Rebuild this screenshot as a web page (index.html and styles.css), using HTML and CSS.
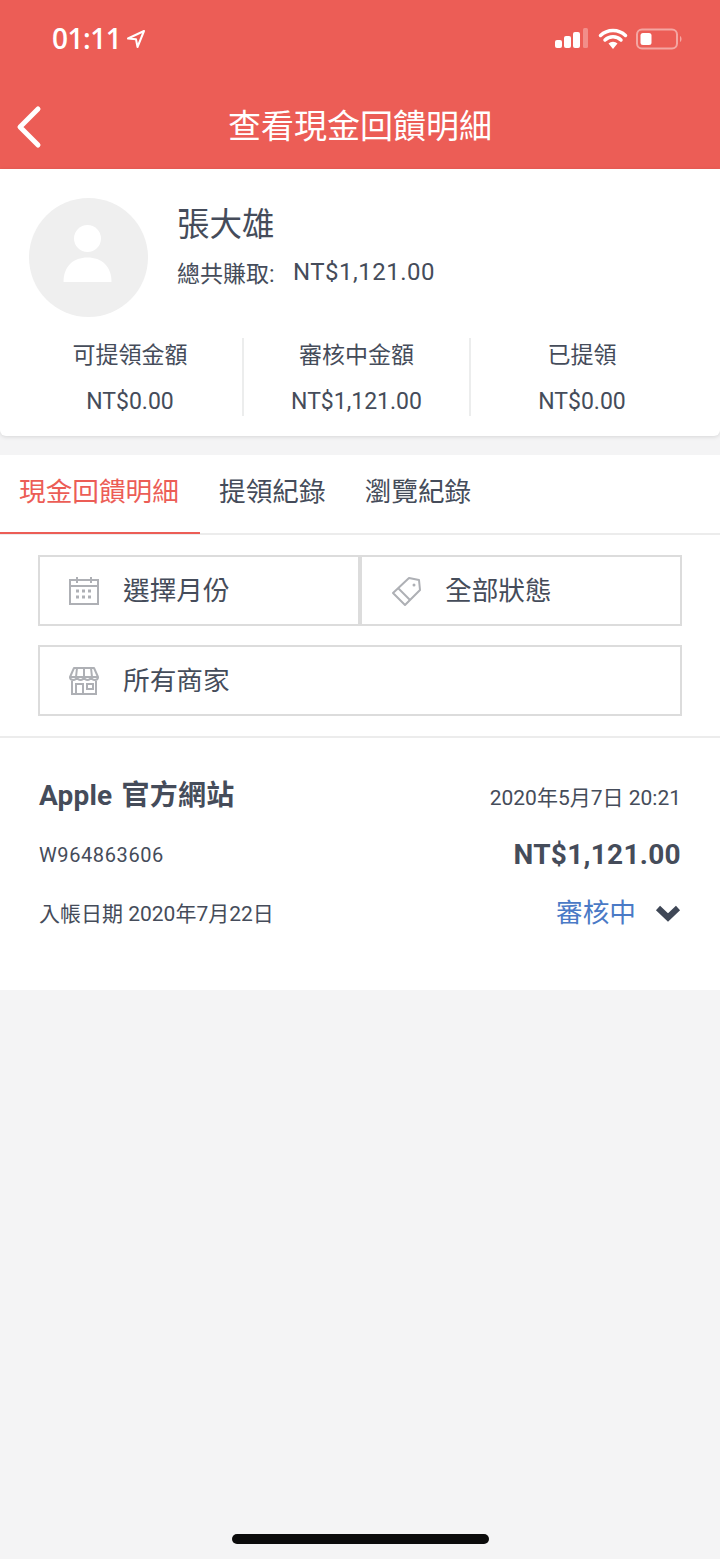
FILE: index.html
```html
<!DOCTYPE html>
<html lang="zh-Hant">
<head>
  <meta charset="UTF-8">
  <title>查看現金回饋明細</title>
  <meta name="viewport" content="width=device-width, initial-scale=1.0" />
  <link rel="stylesheet" href="styles.css">
</head>
<body>

<header class="top">
  <div class="status">
    <div class="clock">
      <span>01:11</span>
      <svg class="arrow" width="20" height="20" viewBox="0 0 20 20"><path d="M18 2 2 9.500l8 .8 1.500 7.700z" fill="none" stroke="#fff" stroke-width="2" stroke-linejoin="round"/></svg>
    </div>
    <div class="status-icons">
      <svg class="signal" width="33" height="20" viewBox="0 0 33 20"><rect x="0" y="12" width="7" height="8" rx="2" fill="#fff"/><rect x="9" y="8" width="7" height="12" rx="2" fill="#fff"/><rect x="18" y="4" width="7" height="16" rx="2" fill="#fff"/><rect x="28" y="0" width="5" height="20" rx="1.500" fill="#fff" opacity=".3"/></svg>
      <svg class="wifi" width="30" height="21" viewBox="0 0 30 21"><path d="M2.500 7.500a18 18 0 0 1 25 0M7 12a11.500 11.500 0 0 1 16 0" fill="none" stroke="#fff" stroke-width="3.500" stroke-linecap="round"/><path d="M10.500 15.500a6.500 6.500 0 0 1 9 0L15 21z" fill="#fff"/></svg>
      <svg width="48" height="22" viewBox="0 0 48 22"><rect x="1" y="1.500" width="40" height="19" rx="5" fill="none" stroke="#fff" stroke-opacity=".45" stroke-width="2"/><rect x="4.500" y="5" width="11" height="12" rx="2.500" fill="#fff"/><path d="M44 8c2 .8 2 5.200 0 6z" fill="#fff" fill-opacity=".45"/></svg>
    </div>
  </div>
  <div class="navbar">
    <svg class="back" width="30" height="44" viewBox="0 0 30 44"><path d="M24 4 6 22l18 18" fill="none" stroke="#fff" stroke-width="5" stroke-linecap="round" stroke-linejoin="round"/></svg>
    <h1>查看現金回饋明細</h1>
  </div>
</header>

<section class="profile">
  <div class="profile-top">
    <div class="avatar">
      <svg width="120" height="120" viewBox="0 0 120 120"><circle cx="58.500" cy="40.500" r="13.500" fill="#fff"/><path d="M34.500 84c0-16 10-24.500 24-24.500s24 8.500 24 24.500z" fill="#fff"/></svg>
    </div>
    <div class="who">
      <div class="name">張大雄</div>
      <div class="earned"><span class="earned-label">總共賺取:</span><span class="earned-value">NT$1,121.00</span></div>
    </div>
  </div>
  <div class="stats">
    <div class="stat"><div class="stat-label">可提領金額</div><div class="stat-value">NT$0.00</div></div>
    <div class="stat"><div class="stat-label">審核中金額</div><div class="stat-value">NT$1,121.00</div></div>
    <div class="stat"><div class="stat-label">已提領</div><div class="stat-value">NT$0.00</div></div>
  </div>
</section>

<section class="panel">
  <nav class="tabs">
    <div class="tab active">現金回饋明細</div>
    <div class="tab">提領紀錄</div>
    <div class="tab">瀏覽紀錄</div>
  </nav>

  <div class="filters">
    <div class="filter-row">
      <div class="filter">
        <svg class="filter-icon" width="32" height="30" viewBox="0 0 32 30" fill="none" stroke="#aeb0b5" stroke-width="2"><rect x="2" y="4" width="28" height="24"/><path d="M2 10h28M9 1v6M23 1v6"/><path d="M8 15h3M14 15h3M20 15h3M8 21h3M14 21h3M20 21h3" stroke-width="3"/></svg>
        <span>選擇月份</span>
      </div>
      <div class="filter">
        <svg class="filter-icon" width="32" height="32" viewBox="0 0 32 32" fill="none" stroke="#aeb0b5" stroke-width="2"><path d="M19 3 29 5l1 10-15 15L3 18z" stroke-linejoin="round"/><path d="m8 13 12 12"/><circle cx="24" cy="10" r="1.500" fill="#aeb0b5" stroke="none"/></svg>
        <span>全部狀態</span>
      </div>
    </div>
    <div class="filter">
      <svg class="filter-icon" width="32" height="30" viewBox="0 0 32 30" fill="none" stroke="#aeb0b5" stroke-width="2"><path d="M6 2h20l4 9H2z" stroke-linejoin="round"/><path d="M2 11c0 4 6 4 7 0 1 4 6 4 7 0 1 4 6 4 7 0 1 4 7 4 7 0M9 2 8 11M16 2v9M23 2l1 9"/><path d="M4 15v13h24V15M8 28V18h7v10M19 18h6v5h-6z"/></svg>
      <span>所有商家</span>
    </div>
  </div>
</section>

<section class="record">
  <div class="record-row">
    <div class="shop">Apple 官方網站</div>
    <div class="date">2020年5月7日 20:21</div>
  </div>
  <div class="record-row row-order">
    <div class="order">W964863606</div>
    <div class="amount">NT$1,121.00</div>
  </div>
  <div class="record-row row-state">
    <div class="posted">入帳日期 2020年7月22日</div>
    <div class="state">
      <span>審核中</span>
      <svg width="26" height="18" viewBox="0 0 26 18"><path d="m3 4 10 9.500L23 4" fill="none" stroke="#3f4756" stroke-width="6"/></svg>
    </div>
  </div>
</section>

<div class="home-bar"></div>

</body>
</html>
```

FILE: styles.css
```css
* {
  box-sizing: border-box;
}

html, body {
  height: 100%;
}

body {
  margin: 0;
  background: #f4f4f5;
  color: #454c5a;
  font-family: Roboto, "Noto Sans CJK TC", sans-serif;
  overflow: hidden;
  position: relative;
}

.top {
  height: 169px;
  background: #ec5d56;
  color: #fff;
}

.status {
  height: 77px;
  padding: 21px 36px 0 52px;
  display: flex;
  justify-content: space-between;
}

.clock {
  display: flex;
  align-items: flex-start;
  gap: 5px;
  font-family: "Open Sans", Roboto, sans-serif;
  font-size: 28px;
  line-height: 34px;
  font-weight: 600;
  letter-spacing: -.5px;
}

.arrow {
  margin-top: 8px;
}

.status-icons {
  display: flex;
  align-items: flex-start;
  padding: 7px 0 0 0;
}

.signal {
  margin-right: 10px;
}

.wifi {
  margin-right: 8px;
}

.navbar {
  height: 92px;
  padding-left: 14px;
  display: flex;
  align-items: center;
  position: relative;
}

.back {
  margin-top: 8px;
}

.navbar h1 {
  position: absolute;
  left: 0;
  right: 0;
  top: 27px;
  margin: 0;
  text-align: center;
  font-size: 33px;
  line-height: 46px;
  font-weight: 400;
}

.profile {
  height: 267px;
  background: #fff;
  border-radius: 0 0 6px 6px;
  box-shadow: 0 1px 4px rgba(0, 0, 0, .12);
  padding-top: 29px;
}

.profile-top {
  display: flex;
  padding-left: 29px;
  height: 140px;
}

.avatar {
  width: 119px;
  height: 119px;
  border-radius: 50%;
  background: #efefef;
  overflow: hidden;
}

.who {
  margin-left: 29px;
}

.name {
  font-size: 32.500px;
  line-height: 54px;
}

.earned {
  display: flex;
  align-items: center;
  height: 40px;
}

.earned-label {
  font-size: 23px;
  width: 116px;
}

.earned-value {
  font-size: 24px;
  letter-spacing: .5px;
}

.stats {
  display: flex;
  padding-left: 18px;
}

.stat {
  width: 227px;
  height: 78px;
  padding-top: 1px;
  text-align: center;
  border-right: 2px solid #eceded;
}

.stat:first-child {
  width: 226px;
}

.stat:last-child {
  width: 222px;
  border-right: none;
}

.stat-label {
  font-size: 23px;
  line-height: 34px;
}

.stat-value {
  margin-top: 13px;
  font-size: 23px;
  line-height: 32px;
}

.panel {
  margin-top: 19px;
  background: #fff;
  border-bottom: 2px solid #ececec;
  height: 283px;
}

.tabs {
  display: flex;
  height: 80px;
  border-bottom: 2px solid #ececec;
}

.tab {
  padding: 0 20px 0 19px;
  font-size: 26.670px;
  line-height: 74px;
  height: 79px;
  white-space: nowrap;
}

.tab.active {
  width: 200px;
  color: #ec5d56;
  border-bottom: 2px solid #ec5d56;
}

.filters {
  padding: 20px 38px 0;
}

.filter-row {
  display: flex;
  margin-bottom: 19px;
}

.filter-row .filter {
  flex: 1;
}

.filter {
  height: 71px;
  border: 2px solid #dcdcdc;
  display: flex;
  align-items: center;
  padding: 0 0 4px 28px;
  font-size: 26.670px;
}

.filter-icon {
  margin: 4px 23px 0 0;
  flex: none;
}

.record {
  height: 252px;
  background: #fff;
  padding: 38px 39px 0;
}

.record-row {
  display: flex;
  justify-content: space-between;
  align-items: center;
}

.shop {
  font-size: 28px;
  line-height: 40px;
  font-weight: 700;
  letter-spacing: .2px;
  word-spacing: 2px;
}

.date {
  font-size: 21px;
}

.row-order {
  margin-top: 19px;
}

.order {
  font-size: 20px;
  letter-spacing: .6px;
}

.amount {
  font-size: 28px;
  line-height: 40px;
  font-weight: 700;
  letter-spacing: .3px;
}

.row-state {
  margin-top: 18px;
}

.posted {
  font-size: 21px;
  margin-top: -2px;
}

.state {
  display: flex;
  align-items: center;
  gap: 19px;
  color: #4a7ac6;
  font-size: 26.670px;
  line-height: 40px;
}

.home-bar {
  position: absolute;
  left: 232px;
  bottom: 15px;
  width: 257px;
  height: 10px;
  border-radius: 5px;
  background: #0b0b0b;
}
```
